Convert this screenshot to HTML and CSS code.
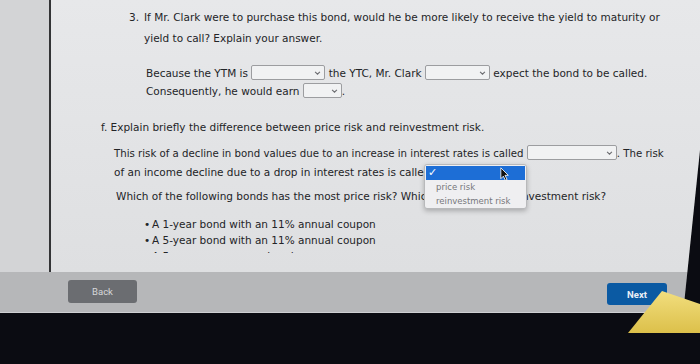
FILE: index.html
```html
<!DOCTYPE html>
<html lang="en">
<head>
  <meta charset="UTF-8" />
  <title>Bond Question</title>
  <link rel="stylesheet" href="styles.css">
</head>
<body>

<div class="screen">
  <div class="main">
    <div class="sidebar"></div>

    <div class="content">
      <p class="q3"><span class="num">3.</span>If Mr. Clark were to purchase this bond, would he be more likely to receive the yield to maturity or<br>yield to call? Explain your answer.</p>

      <div class="answer">
        <div class="line">Because the YTM is <span class="select w74"><svg viewBox="0 0 8 5"><path d="M1 1l3 3 3-3"/></svg></span> the YTC, Mr. Clark <span class="select w65"><svg viewBox="0 0 8 5"><path d="M1 1l3 3 3-3"/></svg></span> expect the bond to be called.</div>
        <div class="line">Consequently, he would earn <span class="select w39"><svg viewBox="0 0 8 5"><path d="M1 1l3 3 3-3"/></svg></span>.</div>
      </div>

      <p class="part">f. Explain briefly the difference between price risk and reinvestment risk.</p>

      <div class="part-body">
        <div class="line tight">This risk of a decline in bond values due to an increase in interest rates is called <span class="select w90"><svg viewBox="0 0 8 5"><path d="M1 1l3 3 3-3"/></svg></span>. The risk</div>
        <div class="line">of an income decline due to a drop in interest rates is called <span class="select w90"><svg viewBox="0 0 8 5"><path d="M1 1l3 3 3-3"/></svg></span>.</div>

        <p class="which">Which of the following bonds has the most price risk? Which has the most reinvestment risk?</p>

        <ul class="bonds">
          <li>A 1-year bond with an 11% annual coupon</li>
          <li>A 5-year bond with an 11% annual coupon</li>
          <li>A 5-year zero coupon bond</li>
        </ul>
      </div>

      <div class="dropdown">
        <div class="opt selected">&#10003;</div>
        <div class="opt">price risk</div>
        <div class="opt">reinvestment risk</div>
      </div>

      <svg class="cursor" viewBox="0 0 12 18">
        <path d="M1 1v13l3-3 2.5 5 2-1-2.5-5h4z" fill="#111" stroke="#fff" stroke-width="1"/>
      </svg>
    </div>
  </div>

  <div class="footer">
    <button class="btn back">Back</button>
    <button class="btn next">Next</button>
  </div>
</div>

<svg class="note" viewBox="0 0 80 56">
  <defs>
    <linearGradient id="yel" x1="0" y1="0" x2="0" y2="1">
      <stop offset="0" stop-color="#f2de7e"/>
      <stop offset="1" stop-color="#dcc04a"/>
    </linearGradient>
  </defs>
  <polygon points="42,11 80,24 80,53 8,53" fill="url(#yel)"/>
</svg>

</body>
</html>
```

FILE: styles.css
```css
body {
  margin: 0;
  width: 700px;
  height: 364px;
  overflow: hidden;
  position: relative;
  background-color: #0b0c12;
  font-family: "DejaVu Sans", Verdana, sans-serif;
  color: #232427;
}

.screen {
  width: 700px;
  border-bottom: 1px solid #cfd0d2;
  background-color: #2a2c2d;
  clip-path: polygon(0 0, 700px 0, 700px 150px, 683px 314px, 0 314px);
}

.main {
  display: flex;
  height: 272px;
}

.sidebar {
  width: 49px;
  background-color: #d3d4d6;
  border-right: 2px solid #333436;
}

.content {
  flex: 1;
  position: relative;
  padding-top: 7px;
  font-size: 10.5px;
  background: linear-gradient(180deg, #e7e8ea 0%, #dedfe1 100%);
}

p {
  margin: 0;
}

.q3 {
  line-height: 21px;
  padding-left: 93px;
  text-indent: -15px;
  white-space: nowrap;
}

.num {
  display: inline-block;
  width: 15px;
  text-indent: 0;
}

.line {
  line-height: 18px;
  white-space: nowrap;
}

.line.tight {
  font-size: 10.2px;
}

.answer {
  margin: 15px 0 0 95px;
}

.part {
  margin: 18px 0 0 50px;
  line-height: 18px;
}

.part-body {
  margin: 9px 0 0 63px;
}

.which {
  margin: 6px 0 0 2px;
  line-height: 18px;
  white-space: nowrap;
}

.bonds {
  list-style: none;
  margin: 11px 0 0 30px;
  padding: 0;
  height: 37px;
  overflow: hidden;
}

.bonds li {
  line-height: 16px;
}

.bonds li::before {
  content: "\2022";
  display: inline-block;
  width: 8px;
}

.select {
  display: inline-block;
  position: relative;
  height: 13px;
  vertical-align: -3px;
  background-color: #f1f2f3;
  border: 1px solid #9c9da0;
  border-radius: 2px;
}

.select svg {
  position: absolute;
  right: 3px;
  top: 5px;
  width: 7px;
  height: 4px;
  fill: none;
  stroke: #6d6e72;
  stroke-width: 1.4;
}

.w74 { width: 72px; }
.w65 { width: 63px; }
.w39 { width: 37px; }
.w90 { width: 88px; }

.dropdown {
  position: absolute;
  left: 373px;
  top: 164px;
  width: 101px;
  height: 42px;
  padding-top: 1px;
  background-color: #efeff1;
  border: 1px solid #b8b9bb;
  border-radius: 3px;
  box-shadow: 0 2px 5px rgba(0,0,0,0.25);
  font-size: 8.5px;
  color: #76777b;
}

.opt {
  height: 14px;
  line-height: 14px;
  padding-left: 11px;
}

.opt.selected {
  margin: 0 1px;
  padding-left: 2px;
  background-color: #1d6ed6;
  color: #fff;
  font-size: 11px;
  font-weight: bold;
}

.cursor {
  position: absolute;
  left: 449px;
  top: 167px;
  width: 10px;
  height: 15px;
}

.footer {
  display: flex;
  justify-content: space-between;
  align-items: flex-start;
  height: 40px;
  padding: 8px 33px 0 68px;
  box-sizing: border-box;
  background-color: #b6b7b9;
}

.btn {
  border: none;
  border-radius: 3px;
  font-family: Roboto, "Liberation Sans", sans-serif;
  font-size: 9.5px;
  cursor: pointer;
}

.back {
  width: 69px;
  height: 23px;
  background-color: #6b6d71;
  color: #d6d7d9;
}

.next {
  width: 60px;
  height: 22px;
  margin-top: 3px;
  background-color: #0b5aa3;
  color: #e8eef6;
  font-weight: bold;
}

.note {
  position: absolute;
  left: 620px;
  top: 280px;
  width: 80px;
  height: 56px;
}
```
